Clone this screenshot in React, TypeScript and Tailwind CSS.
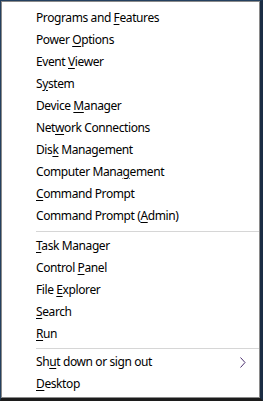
import React from "react";

type Item = { pre: string; key: string; post: string; arrow?: boolean };

const groups: Item[][] = [
  [
    { pre: "Programs and ", key: "F", post: "eatures" },
    { pre: "Power ", key: "O", post: "ptions" },
    { pre: "Event ", key: "V", post: "iewer" },
    { pre: "S", key: "y", post: "stem" },
    { pre: "Device ", key: "M", post: "anager" },
    { pre: "Net", key: "w", post: "ork Connections" },
    { pre: "Dis", key: "k", post: " Management" },
    { pre: "Computer Mana", key: "g", post: "ement" },
    { pre: "", key: "C", post: "ommand Prompt" },
    { pre: "Command Prompt (", key: "A", post: "dmin)" },
  ],
  [
    { pre: "", key: "T", post: "ask Manager" },
    { pre: "Control ", key: "P", post: "anel" },
    { pre: "File ", key: "E", post: "xplorer" },
    { pre: "", key: "S", post: "earch" },
    { pre: "", key: "R", post: "un" },
  ],
  [
    { pre: "Sh", key: "u", post: "t down or sign out", arrow: true },
    { pre: "", key: "D", post: "esktop" },
  ],
];

const MenuRow = ({ item }: { item: Item }) => (
  <div className="h-[22px] flex items-center pl-[34px] pr-[13px] text-[12px] tracking-[-0.4px] leading-none text-black">
    <span className="flex-1">
      {item.pre}
      <span className="underline underline-offset-[2px]">{item.key}</span>
      {item.post}
    </span>
    {item.arrow && (
      <svg width="6" height="11" viewBox="0 0 6 11">
        <path d="M0.5 0.5 L5 5.5 L0.5 10.5" fill="none" stroke="#4a2f6e" strokeWidth="1" />
      </svg>
    )}
  </div>
);

export default function App() {
  return (
    <div
      className="w-[263px] h-[401px] border-t border-l border-[#24405f] border-r-[3px] border-r-[#1b2d44] border-b-[3px] border-b-[#1c1c1c] bg-white"
      style={{ fontFamily: '"Noto Sans", "Open Sans", sans-serif' }}
    >
      <div className="h-full border border-[#8a8a8a] bg-white pt-[5px]">
        {groups.map((g, gi) => (
          <div key={gi}>
            {gi === 1 && <div className="ml-[34px] mt-[4px] mb-[3px] h-px bg-[#d6d6d6]" />}
            {gi === 2 && <div className="ml-[34px] mt-[3px] mb-[2px] h-px bg-[#d6d6d6]" />}
            {g.map((it, i) => (
              <MenuRow key={i} item={it} />
            ))}
          </div>
        ))}
      </div>
    </div>
  );
}
